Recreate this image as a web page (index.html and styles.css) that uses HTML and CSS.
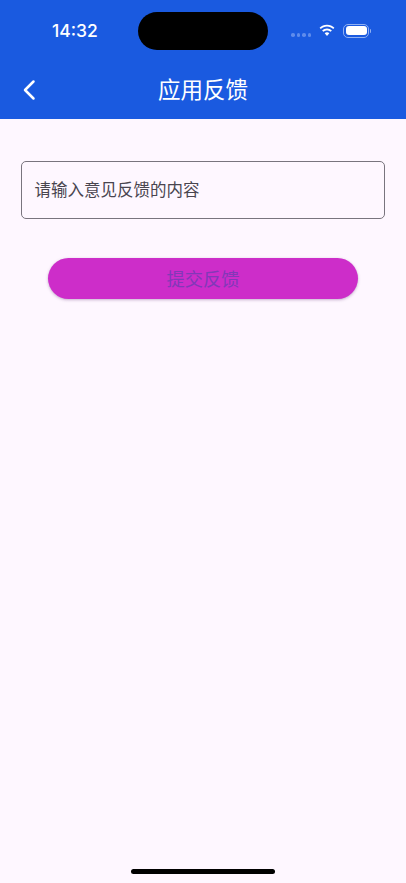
FILE: index.html
```html
<!DOCTYPE html>
<html lang="zh">
<head>
<meta charset="utf-8">
<title>应用反馈</title>
<link rel="stylesheet" href="styles.css">
</head>
<body>
<div class="page">
  <header class="header">
    <div class="status">
      <span class="time">14:32</span>
      <div class="island"></div>
      <div class="indicators">
        <div class="dots"><i></i><i></i><i></i><i></i></div>
        <svg class="wifi" width="18" height="13" viewBox="0 0 17 13"><path d="M8.500 2.600c2.400 0 4.600 1 6.200 2.500l1.200-1.300C14 1.900 11.400.7 8.500.7S3 1.900 1.100 3.800l1.200 1.300C3.900 3.600 6.100 2.600 8.500 2.600z" fill="#fff"/><path d="M8.500 6.400c1.400 0 2.700.6 3.600 1.400l1.300-1.300C12.100 5.300 10.400 4.500 8.500 4.500s-3.600.8-4.900 2l1.300 1.300c.9-.8 2.200-1.400 3.600-1.400z" fill="#fff"/><path d="M8.500 8.300c-.9 0-1.700.3-2.300.9l2.300 2.800 2.300-2.800c-.6-.6-1.400-.9-2.300-.9z" fill="#fff"/></svg>
        <div class="battery"><div class="level"></div></div>
      </div>
    </div>
    <div class="appbar">
      <svg class="back" width="14" height="22" viewBox="0 0 14 22"><path d="M11.500 2.500 3 11l8.500 8.500" fill="none" stroke="#fff" stroke-width="2.500" stroke-linecap="round" stroke-linejoin="round"/></svg>
      <h1 class="title">应用反馈</h1>
    </div>
  </header>
  <main class="content">
    <div class="field">请输入意见反馈的内容</div>
    <button class="submit" type="button">提交反馈</button>
  </main>
  <div class="home-bar"></div>
</div>
</body>
</html>
```
FILE: styles.css
```css
* { box-sizing: border-box; }
html, body { margin: 0; padding: 0; }
body {
  width: 406px;
  height: 883px;
  overflow: hidden;
  background: #fef7ff;
  font-family: Inter, "Noto Sans CJK SC", sans-serif;
}
.page {
  display: flex;
  flex-direction: column;
  height: 883px;
}
.header {
  height: 119px;
  background: #1a5ae0;
  color: #fff;
  display: flex;
  flex-direction: column;
  flex: none;
}
.status {
  height: 62px;
  position: relative;
  display: flex;
  align-items: flex-start;
  justify-content: space-between;
  padding: 12px 37px 0 52px;
}
.time {
  font-size: 17.500px;
  font-weight: 500;
  line-height: 37px;
}
.island {
  position: absolute;
  left: 138px;
  top: 12px;
  width: 130px;
  height: 38px;
  border-radius: 19px;
  background: #000;
}
.indicators {
  display: flex;
  align-items: center;
  gap: 7px;
  margin-top: 11.500px;
}
.dots { display: flex; gap: 2px; margin-top: 9px; }
.dots i {
  width: 3.500px;
  height: 3.500px;
  border-radius: 50%;
  background: #5f8cec;
}
.battery {
  width: 26px;
  height: 14px;
  border-radius: 5px;
  border: 1px solid #8fb0f3;
  padding: 1.500px;
  position: relative;
}
.battery::after {
  content: "";
  position: absolute;
  right: -3px;
  top: 4px;
  width: 1.500px;
  height: 4px;
  border-radius: 0 1px 1px 0;
  background: #8fb0f3;
}
.level {
  height: 100%;
  border-radius: 3px;
  background: #fff;
}
.appbar {
  flex: 1;
  position: relative;
  display: flex;
  align-items: center;
  justify-content: center;
  padding-bottom: 1px;
}
.back {
  position: absolute;
  left: 22px;
  top: 17px;
}
.title {
  margin: 0;
  font-size: 22.500px;
  font-weight: 400;
  line-height: 30px;
}
.content {
  flex: 1;
  padding: 42px 21px 0;
  display: flex;
  flex-direction: column;
  align-items: center;
}
.field {
  width: 364px;
  height: 58px;
  border: 1px solid #79747e;
  border-radius: 5px;
  padding: 0 12.500px 2px;
  display: flex;
  align-items: center;
  font-size: 16.500px;
  color: #49454f;
}
.submit {
  margin-top: 39px;
  width: 310px;
  height: 41px;
  border: 0;
  border-radius: 21px;
  background: #cd2dc9;
  color: #8238b8;
  font-family: inherit;
  font-size: 18.300px;
  padding: 0 0 2px;
  box-shadow: 0 1px 3px rgba(90, 40, 110, .35);
}
.home-bar {
  position: absolute;
  left: 131px;
  top: 869px;
  width: 144px;
  height: 5px;
  border-radius: 3px;
  background: #000;
}
```
